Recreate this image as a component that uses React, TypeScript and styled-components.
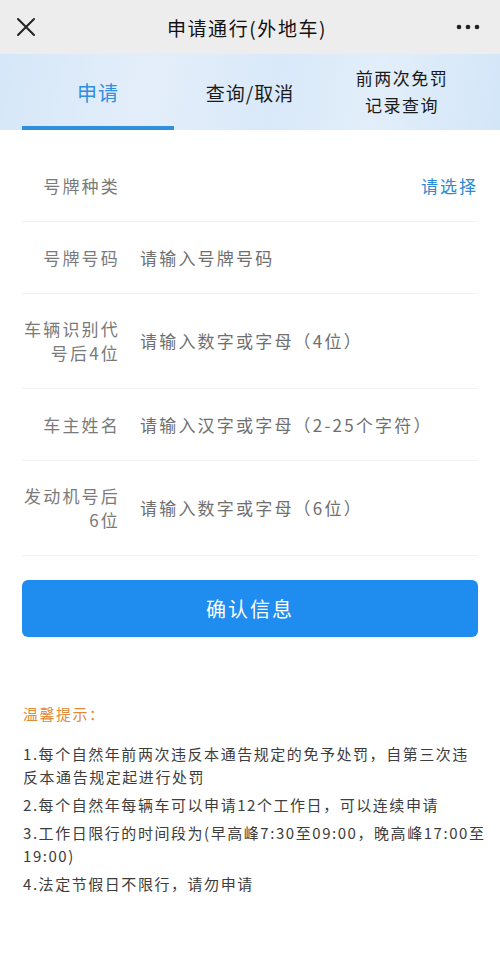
import React from "react";
import styled, { createGlobalStyle } from "styled-components";

const GlobalStyle = createGlobalStyle`
  html, body {
    margin: 0;
    padding: 0;
    background: #ffffff;
  }
  body {
    font-family: "Noto Sans CJK SC", "Noto Sans", sans-serif;
  }
`;

const Page = styled.div`
  width: 500px;
  min-height: 974px;
  background: #ffffff;
`;

const NavBar = styled.div`
  height: 54px;
  background: #ededed;
  display: flex;
  align-items: center;
  justify-content: space-between;
  padding: 0 20px 0 14px;
  box-sizing: border-box;
`;

const NavTitle = styled.div`
  font-size: 19px;
  color: #111111;
  letter-spacing: 1.6px;
`;

const IconSlot = styled.div`
  width: 24px;
  height: 24px;
  display: flex;
  align-items: center;
  justify-content: center;
`;

const TabBar = styled.div`
  height: 76px;
  display: grid;
  grid-template-columns: repeat(3, 1fr);
  padding: 0 22px;
  background: linear-gradient(
    100deg,
    #d5e7f8 0%,
    #e4eefa 30%,
    #d9e9f9 55%,
    #e2eefa 75%,
    #d3e6f8 100%
  );
`;

const Tab = styled.div<{ $active?: boolean }>`
  display: flex;
  align-items: center;
  justify-content: center;
  text-align: center;
  font-size: ${(p) => (p.$active ? "20px" : "19px")};
  line-height: 27px;
  color: ${(p) => (p.$active ? "#2f8ee0" : "#1a1a1a")};
  letter-spacing: 1px;
  border-bottom: 4px solid ${(p) => (p.$active ? "#2e8ee0" : "transparent")};
  padding-top: 4px;
`;

const SmallTab = styled(Tab)`
  font-size: 17px;
  line-height: 27px;
  padding-top: 2px;
  padding-bottom: 0;
  letter-spacing: 1.5px;
`;

const Form = styled.div`
  padding: 20px 22px 0;
`;

const Row = styled.div`
  display: flex;
  align-items: center;
  min-height: 72px;
  padding: 23px 0;
  box-sizing: border-box;
  border-bottom: 1px solid #f2f2f2;
`;

const Label = styled.div`
  width: 98px;
  flex-shrink: 0;
  text-align: right;
  font-size: 17px;
  line-height: 24px;
  color: #7a7a7a;
  letter-spacing: 2.2px;
`;

const Placeholder = styled.div`
  flex: 1;
  margin-left: 20px;
  font-size: 17px;
  line-height: 24px;
  color: #6f6f6f;
  letter-spacing: 2.2px;
`;

const Picker = styled.div`
  margin-left: auto;
  font-size: 17px;
  color: #2b8ad6;
  letter-spacing: 2px;
`;

const ConfirmButton = styled.button`
  display: block;
  width: 456px;
  height: 57px;
  margin: 24px 22px 0;
  border: none;
  border-radius: 6px;
  background: #1f8cf0;
  color: #ffffff;
  font-family: "Noto Sans CJK SC", sans-serif;
  font-size: 20px;
  letter-spacing: 2px;
`;

const Tips = styled.div`
  padding: 66px 23px 40px;
`;

const TipsTitle = styled.div`
  font-size: 15px;
  color: #e08a3a;
  letter-spacing: 1.5px;
  margin-bottom: 18px;
`;

const TipItem = styled.p`
  margin: 0 0 5px;
  font-size: 15px;
  line-height: 23px;
  color: #3d3d3d;
  letter-spacing: 1.55px;
  width: 468px;
  white-space: pre-line;
`;

const CloseIcon = () => (
  <svg width="20" height="20" viewBox="0 0 20 20">
    <path
      d="M2 2 L18 18 M18 2 L2 18"
      stroke="#222"
      strokeWidth="2"
      strokeLinecap="round"
    />
  </svg>
);

const MoreIcon = () => (
  <svg width="24" height="6" viewBox="0 0 24 6">
    <circle cx="3" cy="3" r="2.3" fill="#222" />
    <circle cx="12" cy="3" r="2.3" fill="#222" />
    <circle cx="21" cy="3" r="2.3" fill="#222" />
  </svg>
);

const fields = [
  { label: ["号牌号码"], placeholder: "请输入号牌号码" },
  { label: ["车辆识别代", "号后4位"], placeholder: "请输入数字或字母（4位）" },
  { label: ["车主姓名"], placeholder: "请输入汉字或字母（2-25个字符）" },
  { label: ["发动机号后", "6位"], placeholder: "请输入数字或字母（6位）" },
];

const tips = [
  "1.每个自然年前两次违反本通告规定的免予处罚，自第三次违\n反本通告规定起进行处罚",
  "2.每个自然年每辆车可以申请12个工作日，可以连续申请",
  "3.工作日限行的时间段为(早高峰7:30至09:00，晚高峰17:00至19:00)",
  "4.法定节假日不限行，请勿申请",
];

export default function App() {
  return (
    <Page>
      <GlobalStyle />
      <NavBar>
        <IconSlot>
          <CloseIcon />
        </IconSlot>
        <NavTitle>申请通行(外地车)</NavTitle>
        <IconSlot>
          <MoreIcon />
        </IconSlot>
      </NavBar>

      <TabBar>
        <Tab $active>申请</Tab>
        <Tab>查询/取消</Tab>
        <SmallTab>
          前两次免罚
          <br />
          记录查询
        </SmallTab>
      </TabBar>

      <Form>
        <Row>
          <Label>号牌种类</Label>
          <Picker>请选择</Picker>
        </Row>
        {fields.map((f) => (
          <Row key={f.placeholder}>
            <Label>
              {f.label.map((l) => (
                <div key={l}>{l}</div>
              ))}
            </Label>
            <Placeholder>{f.placeholder}</Placeholder>
          </Row>
        ))}
      </Form>

      <ConfirmButton>确认信息</ConfirmButton>

      <Tips>
        <TipsTitle>温馨提示：</TipsTitle>
        {tips.map((t) => (
          <TipItem key={t}>{t}</TipItem>
        ))}
      </Tips>
    </Page>
  );
}
